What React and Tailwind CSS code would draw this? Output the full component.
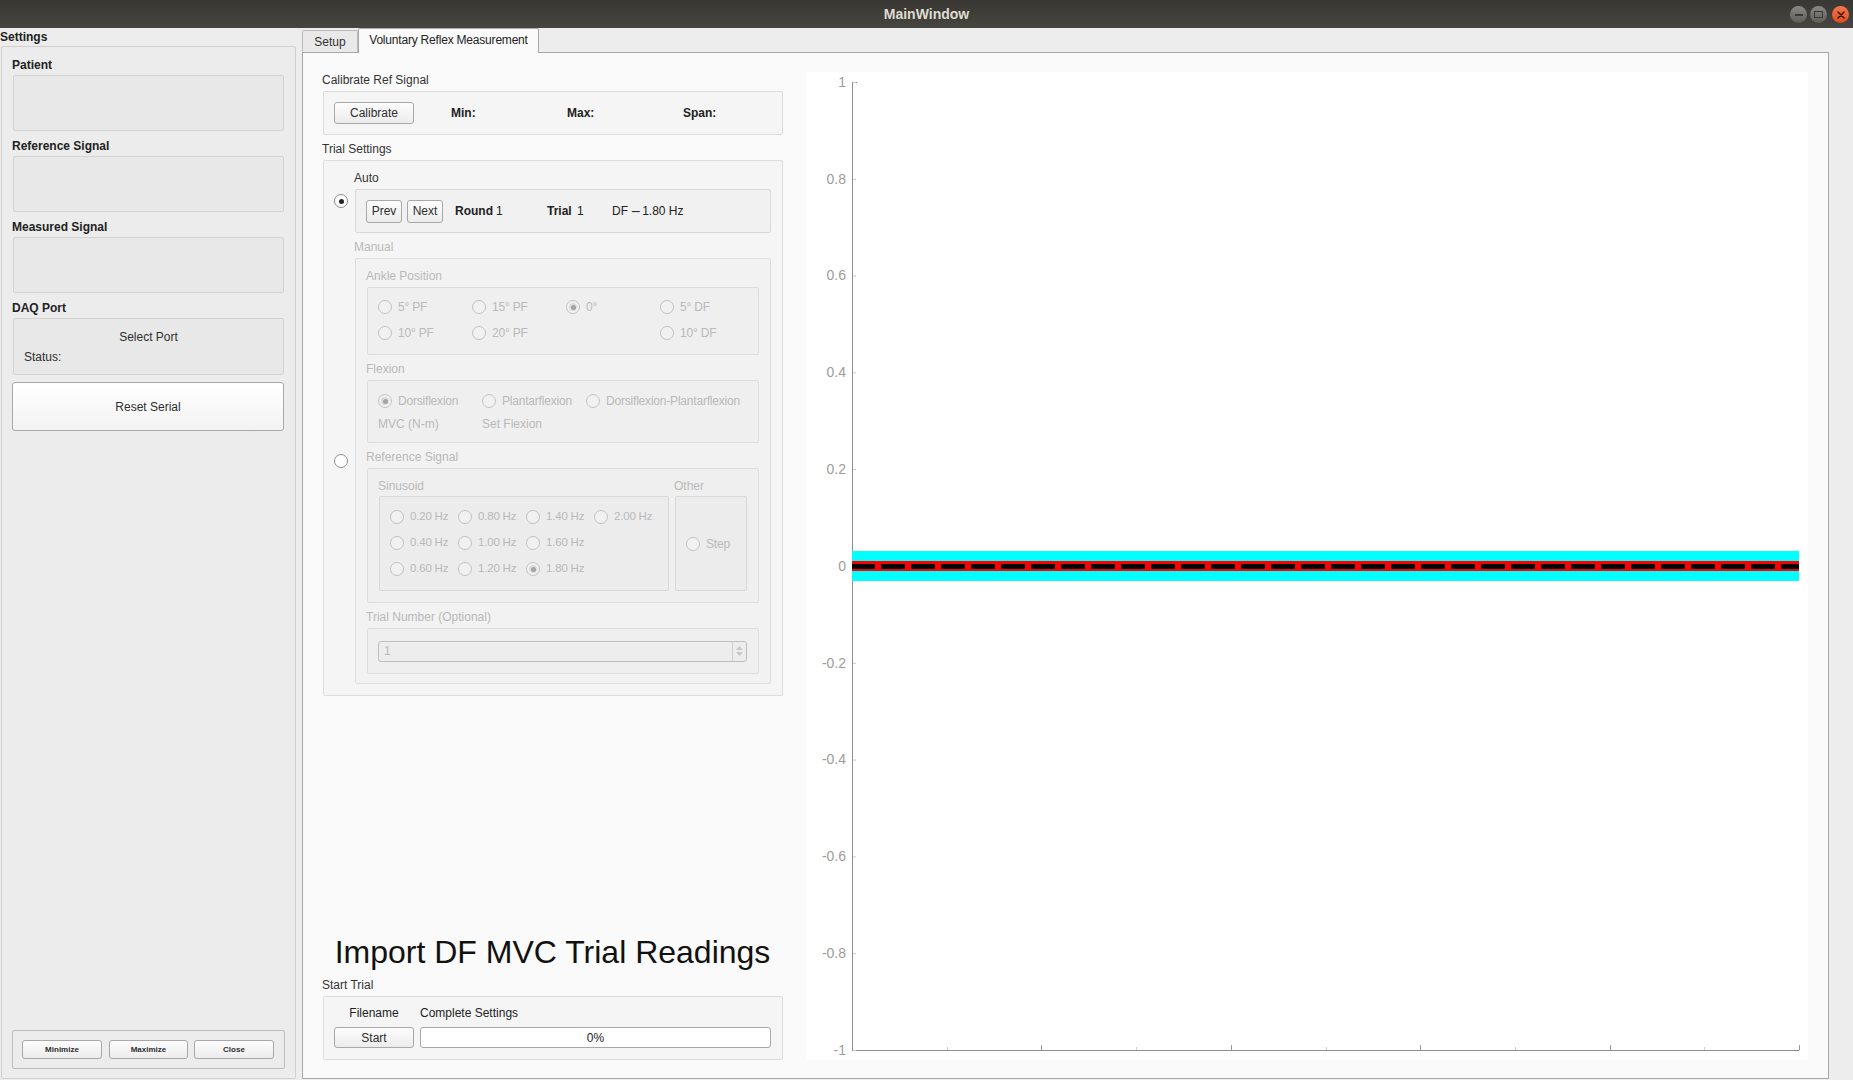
import React from 'react';

const DIS = 'text-[#b9b9b9]';

function Btn({ children, className = '' }) {
  return (
    <div className={`flex shrink-0 items-center justify-center rounded-[3px] border border-[#a8a8a8] bg-linear-to-b from-[#fdfdfd] to-[#ececec] text-[#2e2e2e] ${className}`}>
      {children}
    </div>
  );
}

function Radio({ checked = false, disabled = false, label, className = '' }) {
  return (
    <div className={`flex items-center gap-[6px] whitespace-nowrap ${className}`}>
      <span
        className={`flex h-[14px] w-[14px] shrink-0 items-center justify-center rounded-full border ${
          disabled ? 'border-[#c2c2c2] bg-[#f1f1f1]' : 'border-[#8c8c8c] bg-white'
        }`}
      >
        {checked && (
          <span className={`flex h-[8px] w-[8px] items-center justify-center rounded-full ${disabled ? 'bg-[#dcdcdc]' : 'bg-white'}`}>
            <span className={`h-[5px] w-[5px] rounded-full ${disabled ? 'bg-[#a3a3a3]' : 'bg-[#222]'}`} />
          </span>
        )}
      </span>
      {label && <span className={`tracking-[-0.2px] ${disabled ? DIS : ''}`}>{label}</span>}
    </div>
  );
}

function Label({ children, disabled = false, className = '' }) {
  return (
    <div className={`h-[18px] whitespace-nowrap leading-[18px] ${disabled ? DIS : 'text-[#333]'} ${className}`}>
      {children}
    </div>
  );
}

function SideBox({ title, children }) {
  return (
    <div className="mb-[6px]">
      <div className="-ml-[1px] h-[18px] font-bold leading-[18px] text-[#222]">{title}</div>
      <div className="mt-[1px] h-[56px] w-[271px] rounded-[2px] border border-[#d3d3d3] bg-[#e8e8e8]">{children}</div>
    </div>
  );
}

function Plot() {
  const yOf = (v) => 494 - v * 484;
  const yTicks = [1, 0.8, 0.6, 0.4, 0.2, 0, -0.2, -0.4, -0.6, -0.8, -1];
  const xTicks = Array.from({ length: 10 }, (_, i) => 46 + (i + 1) * 94.7);
  return (
    <svg width="1002" height="988" className="block">
      <rect width="1002" height="988" fill="#ffffff" />
      <line x1="46.5" x2="46.5" y1="10" y2="978" stroke="#8e8e8e" />
      <line x1="46" x2="993" y1="978.5" y2="978.5" stroke="#8e8e8e" />
      <line x1="46" x2="51" y1="10.5" y2="10.5" stroke="#8e8e8e" />
      {yTicks.map((v) => (
        <g key={v}>
          <line x1="47" x2="50" y1={yOf(v) + 0.5} y2={yOf(v) + 0.5} stroke="#c9c9c9" />
          <text
            x="40"
            y={yOf(v) + 1}
            textAnchor="end"
            dominantBaseline="middle"
            fill="#9c9c9c"
            fontSize="14"
            fontFamily="Liberation Sans, Arial, sans-serif"
          >
            {v}
          </text>
        </g>
      ))}
      {xTicks.map((x, i) => (
        <line
          key={i}
          x1={Math.round(x) + 0.5}
          x2={Math.round(x) + 0.5}
          y1={i % 2 === 1 ? 973 : 975}
          y2="978"
          stroke={i % 2 === 1 ? '#9a9a9a' : '#cfcfcf'}
        />
      ))}
      <rect x="46" y="479" width="947" height="30" fill="#00ffff" />
      <rect x="46" y="489" width="947" height="10" fill="#ff0000" />
      <line x1="46" x2="993" y1="494.5" y2="494.5" stroke="#000000" strokeWidth="5" strokeDasharray="24 6" strokeDashoffset="1" />
    </svg>
  );
}

export default function App() {
  return (
    <div className="flex h-[1080px] w-[1853px] flex-col overflow-hidden bg-[#ededed] font-['Liberation_Sans',sans-serif] text-[12px] text-[#333]">
      {/* Title bar */}
      <div className="relative flex h-[28px] shrink-0 items-center justify-center bg-linear-to-b from-[#383733] to-[#46453f]">
        <span className="text-[14px] font-bold text-[#dfdbd2]">MainWindow</span>
        <div className="absolute top-[6px] right-[4px] flex items-center gap-[3px]">
          <span className="flex h-[17px] w-[17px] items-center justify-center rounded-full bg-linear-to-b from-[#8a8984] to-[#5e5d59]">
            <span className="h-[2px] w-[8px] bg-[#3a3935]" />
          </span>
          <span className="flex h-[17px] w-[17px] items-center justify-center rounded-full bg-linear-to-b from-[#8a8984] to-[#5e5d59]">
            <span className="h-[7px] w-[9px] border-[1.5px] border-[#3a3935]" />
          </span>
          <span className="ml-[2px] flex h-[17px] w-[17px] items-center justify-center rounded-full bg-linear-to-b from-[#f6774a] to-[#df4a1c]">
            <svg width="8" height="8" viewBox="0 0 8 8">
              <path d="M1 1 L7 7 M7 1 L1 7" stroke="#3b1a0e" strokeWidth="1.6" strokeLinecap="round" />
            </svg>
          </span>
        </div>
      </div>

      <div className="flex h-[1052px]">
        {/* Settings column */}
        <div className="flex w-[296px] shrink-0 flex-col">
          <div className="h-[18px] font-bold leading-[18px] text-[#222]">Settings</div>
          <div className="ml-[1px] flex h-[1033px] w-[295px] flex-col rounded-[2px] border border-[#d0d0d0] bg-[#ececec] px-[11px] pt-[9px] pb-[9px]">
            <SideBox title="Patient" />
            <SideBox title="Reference Signal" />
            <SideBox title="Measured Signal" />
            <div>
              <div className="-ml-[1px] h-[18px] font-bold leading-[18px] text-[#222]">DAQ Port</div>
              <div className="mt-[1px] h-[57px] w-[271px] rounded-[2px] border border-[#d3d3d3] bg-[#e8e8e8]">
                <div className="mt-[9px] h-[18px] text-center leading-[18px] text-[#2e2e2e]">Select Port</div>
                <div className="mt-[2px] ml-[10px] h-[18px] leading-[18px] text-[#2e2e2e]">Status:</div>
              </div>
            </div>
            <Btn className="-ml-[1px] mt-[7px] h-[49px] w-[272px] from-[#ffffff] to-[#f3f3f3]">Reset Serial</Btn>

            <div className="-ml-[1px] mt-auto flex h-[39px] w-[273px] items-center rounded-[2px] border border-[#bdbdbd] pl-[9px]">
              <Btn className="h-[19px] w-[80px] text-[8px] font-bold">Minimize</Btn>
              <Btn className="ml-[7px] h-[19px] w-[79px] text-[8px] font-bold">Maximize</Btn>
              <Btn className="ml-[6px] h-[19px] w-[80px] text-[8px] font-bold">Close</Btn>
            </div>
          </div>
        </div>

        {/* Tab widget */}
        <div className="ml-[6px] flex w-[1527px] flex-col">
          <div className="flex h-[24px] items-end">
            <div className="flex h-[22px] w-[56px] items-center justify-center rounded-t-[2px] border border-b-0 border-[#bababa] bg-[#e9e9e9] text-[#333]">
              Setup
            </div>
            <div className="relative z-10 -mb-[1px] flex h-[25px] w-[181px] items-center justify-center rounded-t-[2px] border border-b-0 border-[#a8a8a8] bg-[#fafafa] pb-[2px] tracking-[-0.2px] text-[#222]">
              Voluntary Reflex Measurement
            </div>
          </div>

          <div className="flex h-[1027px] border border-[#a8a8a8] bg-[#fafafa] pl-[19px] pr-[20px]">
            {/* Controls column */}
            <div className="flex w-[461px] shrink-0 flex-col pt-[18px] pb-[18px]">
              <Label>Calibrate Ref Signal</Label>
              <div className="mt-[2px] ml-[1px] flex h-[44px] w-[460px] items-center rounded-[2px] border border-[#dcdcdc] bg-[#f5f5f5] pl-[10px]">
                <Btn className="h-[22px] w-[80px]">Calibrate</Btn>
                <span className="ml-[37px] w-[116px] shrink-0 font-bold text-[#222]">Min:</span>
                <span className="w-[116px] shrink-0 font-bold text-[#222]">Max:</span>
                <span className="shrink-0 font-bold text-[#222]">Span:</span>
              </div>

              <Label className="mt-[5px]">Trial Settings</Label>
              <div className="mt-[2px] ml-[1px] h-[536px] w-[460px] rounded-[2px] border border-[#dcdcdc] bg-[#f5f5f5] pt-[8px] pl-[10px]">
                {/* Auto row */}
                <div className="flex items-center">
                  <Radio checked />
                  <div className="ml-[7px]">
                    <Label className="-ml-[1px]">Auto</Label>
                    <div className="mt-[2px] flex h-[44px] w-[416px] items-center rounded-[2px] border border-[#d8d8d8] bg-[#f1f1f1] pl-[10px]">
                      <Btn className="h-[23px] w-[36px]">Prev</Btn>
                      <Btn className="ml-[5px] h-[23px] w-[36px]">Next</Btn>
                      <span className="ml-[12px] w-[41px] shrink-0 font-bold text-[#222]">Round</span>
                      <span className="w-[51px] shrink-0 text-[#222]">1</span>
                      <span className="w-[30px] shrink-0 font-bold text-[#222]">Trial</span>
                      <span className="w-[35px] shrink-0 text-[#222]">1</span>
                      <span className="shrink-0 whitespace-nowrap text-[#222]">
                        DF <span className="tracking-[-1.5px]">---</span> 1.80 Hz
                      </span>
                    </div>
                  </div>
                </div>

                {/* Manual row */}
                <div className="mt-[5px] flex items-center">
                  <Radio />
                  <div className="ml-[7px]">
                    <Label disabled className="-ml-[1px]">Manual</Label>
                    <div className="mt-[2px] h-[426px] w-[416px] rounded-[2px] border border-[#dedede] bg-[#f2f2f2] pt-[8px] pl-[11px]">
                      <Label disabled className="-ml-[1px]">Ankle Position</Label>
                      <div className="mt-[2px] h-[68px] w-[392px] rounded-[2px] border border-[#dddddd] bg-[#efefef] pt-[6px] pl-[10px]">
                        <div className="grid grid-cols-[94px_94px_94px_94px] grid-rows-[26px_26px]">
                          <Radio disabled label="5° PF" />
                          <Radio disabled label="15° PF" />
                          <Radio disabled checked label="0°" />
                          <Radio disabled label="5° DF" />
                          <Radio disabled label="10° PF" />
                          <Radio disabled label="20° PF" />
                          <div />
                          <Radio disabled label="10° DF" />
                        </div>
                      </div>

                      <Label disabled className="-ml-[1px] mt-[5px]">Flexion</Label>
                      <div className="mt-[2px] h-[63px] w-[392px] rounded-[2px] border border-[#dddddd] bg-[#efefef] pt-[9px] pl-[10px]">
                        <div className="grid grid-cols-[104px_104px_170px] grid-rows-[22px_22px] gap-y-[1px]">
                          <Radio disabled checked label="Dorsiflexion" />
                          <Radio disabled label="Plantarflexion" />
                          <Radio disabled label="Dorsiflexion-Plantarflexion" />
                          <div className={`flex items-center ${DIS}`}>MVC (N-m)</div>
                          <div className={`flex items-center ${DIS}`}>Set Flexion</div>
                        </div>
                      </div>

                      <Label disabled className="-ml-[1px] mt-[5px]">Reference Signal</Label>
                      <div className="mt-[2px] flex h-[135px] w-[392px] rounded-[2px] border border-[#dddddd] bg-[#efefef] pt-[8px] pl-[11px]">
                        <div className="w-[290px]">
                          <Label disabled className="-ml-[1px]">Sinusoid</Label>
                          <div className="mt-[1px] h-[95px] w-[290px] rounded-[2px] border border-[#d9d9d9] bg-[#ececec] pt-[7px] pl-[10px]">
                            <div className="grid grid-cols-[68px_68px_68px_68px] grid-rows-[26px_26px_26px] text-[11.5px]">
                              <Radio disabled label="0.20 Hz" className="gap-[5px]" />
                              <Radio disabled label="0.80 Hz" className="gap-[5px]" />
                              <Radio disabled label="1.40 Hz" className="gap-[5px]" />
                              <Radio disabled label="2.00 Hz" className="gap-[5px]" />
                              <Radio disabled label="0.40 Hz" className="gap-[5px]" />
                              <Radio disabled label="1.00 Hz" className="gap-[5px]" />
                              <Radio disabled label="1.60 Hz" className="gap-[5px]" />
                              <div />
                              <Radio disabled label="0.60 Hz" className="gap-[5px]" />
                              <Radio disabled label="1.20 Hz" className="gap-[5px]" />
                              <Radio disabled checked label="1.80 Hz" className="gap-[5px]" />
                            </div>
                          </div>
                        </div>
                        <div className="ml-[6px] w-[72px]">
                          <Label disabled className="-ml-[1px]">Other</Label>
                          <div className="mt-[1px] flex h-[95px] w-[72px] items-center rounded-[2px] border border-[#d9d9d9] bg-[#ececec] pl-[10px]">
                            <Radio disabled label="Step" />
                          </div>
                        </div>
                      </div>

                      <Label disabled className="-ml-[1px] mt-[5px]">Trial Number (Optional)</Label>
                      <div className="mt-[2px] flex h-[46px] w-[392px] items-center rounded-[2px] border border-[#dddddd] bg-[#efefef] pl-[10px]">
                        <div className="flex h-[21px] w-[369px] items-stretch rounded-[3px] border border-[#bdbdbd] bg-[#ededed]">
                          <div className={`flex flex-1 items-center pl-[5px] ${DIS}`}>1</div>
                          <div className="flex w-[14px] flex-col items-center justify-center gap-[2px] border-l border-[#cfcfcf]">
                            <svg width="7" height="4" viewBox="0 0 7 4">
                              <path d="M0 4 L3.5 0 L7 4 Z" fill="#c8c8c8" />
                            </svg>
                            <svg width="7" height="4" viewBox="0 0 7 4">
                              <path d="M0 0 L3.5 4 L7 0 Z" fill="#c8c8c8" />
                            </svg>
                          </div>
                        </div>
                      </div>
                    </div>
                  </div>
                </div>
              </div>

              <div className="mt-auto mb-[4px] h-[40px] whitespace-nowrap text-center text-[32px] leading-[40px] text-[#111]">
                Import DF MVC Trial Readings
              </div>
              <Label>Start Trial</Label>
              <div className="mt-[2px] ml-[1px] h-[64px] w-[460px] rounded-[2px] border border-[#dcdcdc] bg-[#f5f5f5] pt-[7px] pl-[10px]">
                <div className="flex h-[18px] items-center">
                  <span className="w-[80px] shrink-0 text-center text-[#222]">Filename</span>
                  <span className="ml-[6px] text-[#222]">Complete Settings</span>
                </div>
                <div className="mt-[5px] flex">
                  <Btn className="h-[21px] w-[80px]">Start</Btn>
                  <div className="ml-[6px] flex h-[21px] w-[351px] items-center justify-center rounded-[3px] border border-[#a8a8a8] bg-white text-[#222]">
                    0%
                  </div>
                </div>
              </div>
            </div>

            {/* Plot */}
            <div className="mt-[19px] ml-[23px] h-[988px] w-[1002px] shrink-0">
              <Plot />
            </div>
          </div>
        </div>
      </div>
    </div>
  );
}
